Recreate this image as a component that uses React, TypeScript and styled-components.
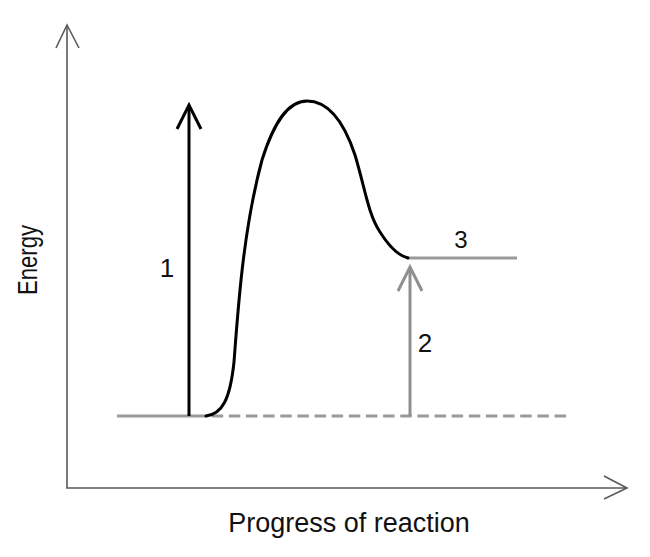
import React from "react";
import styled, { createGlobalStyle } from "styled-components";

const GlobalStyle = createGlobalStyle`
  html, body {
    margin: 0;
    padding: 0;
    background: #ffffff;
  }
  body {
    font-family: "Liberation Sans", Arial, sans-serif;
  }
`;

const Page = styled.div`
  display: flex;
  width: 650px;
  height: 557px;
  background: #ffffff;
`;

const Canvas = styled.svg`
  display: block;
  width: 650px;
  height: 557px;
`;

const Axis = styled.path`
  fill: none;
  stroke: #5a5a5a;
  stroke-width: 1.6;
  stroke-linejoin: miter;
`;

const Level = styled.path<{ $dashed?: boolean }>`
  fill: none;
  stroke: #9a9a9a;
  stroke-width: 3;
  stroke-dasharray: ${(p) => (p.$dashed ? "11.5 5.64" : "none")};
`;

const Arrow = styled.path<{ $tone: "dark" | "grey" }>`
  fill: none;
  stroke: ${(p) => (p.$tone === "dark" ? "#000000" : "#8f8f8f")};
  stroke-width: 3;
  stroke-linecap: butt;
  stroke-linejoin: miter;
`;

const Curve = styled.path`
  fill: none;
  stroke: #000000;
  stroke-width: 3;
  stroke-linecap: round;
`;

const Label = styled.text<{ $size: number }>`
  font-family: "Liberation Sans", Arial, sans-serif;
  font-size: ${(p) => p.$size}px;
  fill: #111111;
  text-anchor: middle;
`;

export default function App() {
  return (
    <>
      <GlobalStyle />
      <Page>
        <Canvas viewBox="0 0 650 557" xmlns="http://www.w3.org/2000/svg">
          {/* axes */}
          <Axis d="M67 25 L67 488 L627 488" />
          <Axis d="M56 48 L67 25 L79 48" />
          <Axis d="M604 476 L627 488 L604 499" />

          {/* reactant level: solid then dashed */}
          <Level d="M117 416 L207 416" />
          <Level $dashed d="M566 416 L207 416" />

          {/* product level */}
          <Level d="M407 258 L517 258" />

          {/* arrow 1 */}
          <Arrow $tone="dark" d="M189 416 L189 105" />
          <Arrow $tone="dark" d="M177 129 L189 105 L201 129" />

          {/* arrow 2 */}
          <Arrow $tone="grey" d="M410 416 L410 267" />
          <Arrow $tone="grey" d="M398 291 L410 267 L422 291" />

          {/* energy profile */}
          <Curve d="M206 416 C222 414 230 400 234 362 C238 310 243 230 262 160 C274 122 288 101 307 101 C330 101 345 125 355 155 C365 188 368 214 380 232 C390 248 400 256 408 258" />

          {/* labels */}
          <Label $size={26} x={167} y={277}>1</Label>
          <Label $size={26} x={425} y={352}>2</Label>
          <Label $size={24} x={461} y={248}>3</Label>
          <Label $size={27} x={349} y={532}>Progress of reaction</Label>
          <Label $size={27} transform="translate(37 260) rotate(-90) scale(0.82 1)">
            Energy
          </Label>
        </Canvas>
      </Page>
    </>
  );
}
